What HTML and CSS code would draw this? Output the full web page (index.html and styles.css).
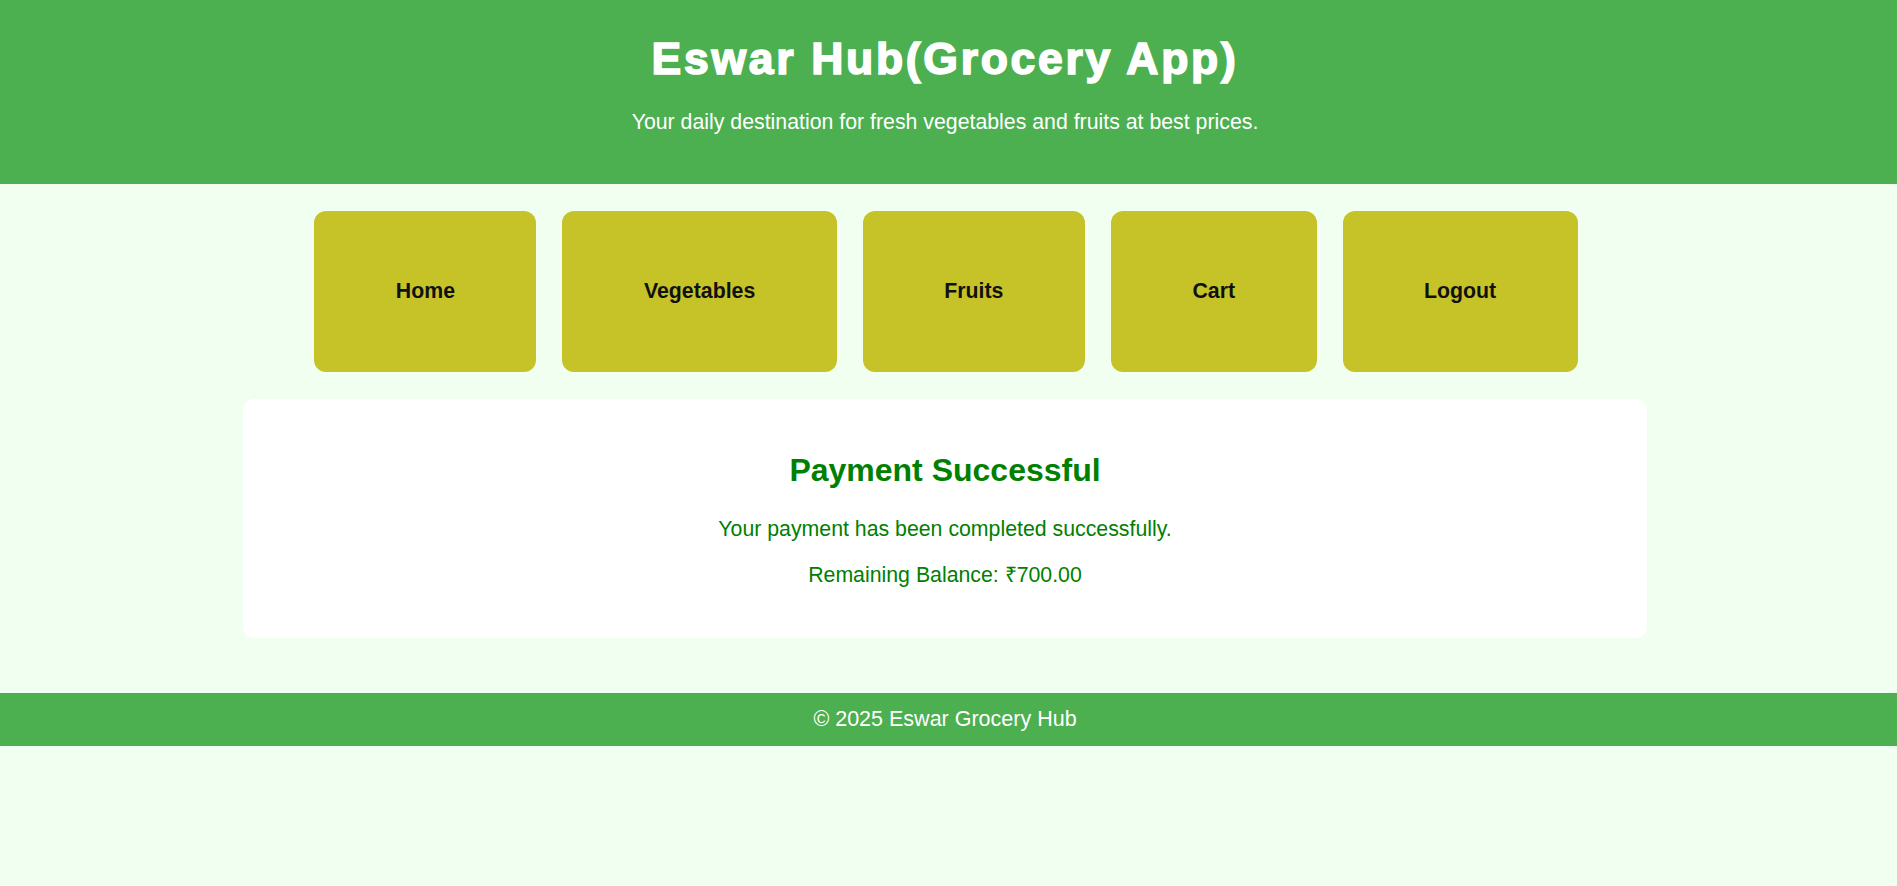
FILE: index.html
```html
<!DOCTYPE html>
<html lang="en">
<head>
<meta charset="utf-8">
<title>Eswar Hub - Payment</title>
<link rel="stylesheet" href="styles.css">
</head>
<body>
  <header class="site-header">
    <h1 class="site-title">Eswar Hub(Grocery App)</h1>
    <p class="site-tagline">Your daily destination for fresh vegetables and fruits at best prices.</p>
  </header>

  <nav class="main-nav">
    <a class="nav-btn" href="#">Home</a>
    <a class="nav-btn" href="#">Vegetables</a>
    <a class="nav-btn" href="#">Fruits</a>
    <a class="nav-btn" href="#">Cart</a>
    <a class="nav-btn" href="#">Logout</a>
  </nav>

  <main class="content">
    <section class="card">
      <h2 class="card-title">Payment Successful</h2>
      <p class="card-text first">Your payment has been completed successfully.</p>
      <p class="card-text second">Remaining Balance: ₹700.00</p>
    </section>
  </main>

  <footer class="site-footer">
    <p class="footer-text">© 2025 Eswar Grocery Hub</p>
  </footer>
</body>
</html>
```

FILE: styles.css
```css
* {
  box-sizing: border-box;
}

html, body {
  margin: 0;
  padding: 0;
}

body {
  background: #f0fff0;
  font-family: "Liberation Sans", Arial, sans-serif;
  font-size: 21.3px;
  min-height: 886px;
}

.site-header {
  background: #4caf50;
  color: #ffffff;
  text-align: center;
  padding: 34px 7px 49.5px 0;
}

.site-title {
  margin: 0;
  font-size: 44.5px;
  line-height: 50px;
  font-weight: 700;
  letter-spacing: 2.7px;
  -webkit-text-stroke: 1.6px #ffffff;
}

.site-tagline {
  margin: 25.5px 0 0;
  font-size: 21.3px;
  line-height: 25px;
}

.main-nav {
  display: flex;
  justify-content: center;
  gap: 26px;
  padding: 27px 5px 0 0;
}

.nav-btn {
  display: block;
  background: #c5c328;
  color: #111111;
  text-decoration: none;
  font-weight: 700;
  font-size: 21.3px;
  line-height: 25px;
  padding: 68px 81.5px;
  border-radius: 12px;
}

.content {
  padding: 27px 7px 0 0;
}

.card {
  width: 1404px;
  margin: 0 auto;
  background: #ffffff;
  border-radius: 11px;
  text-align: center;
  color: #008000;
  padding: 53.4px 20px 49.6px;
}

.card-title {
  margin: 0;
  font-size: 32px;
  line-height: 37px;
  font-weight: 700;
}

.card-text {
  margin: 0;
  font-size: 21.3px;
  line-height: 25px;
}

.card-text.first {
  margin-top: 27.4px;
}

.card-text.second {
  margin-top: 21.6px;
}

.site-footer {
  margin-top: 55px;
  background: #4caf50;
  color: #ffffff;
  text-align: center;
  padding: 14px 7px 14px 0;
}

.footer-text {
  margin: 0;
  font-size: 21.5px;
  line-height: 25px;
}
```
